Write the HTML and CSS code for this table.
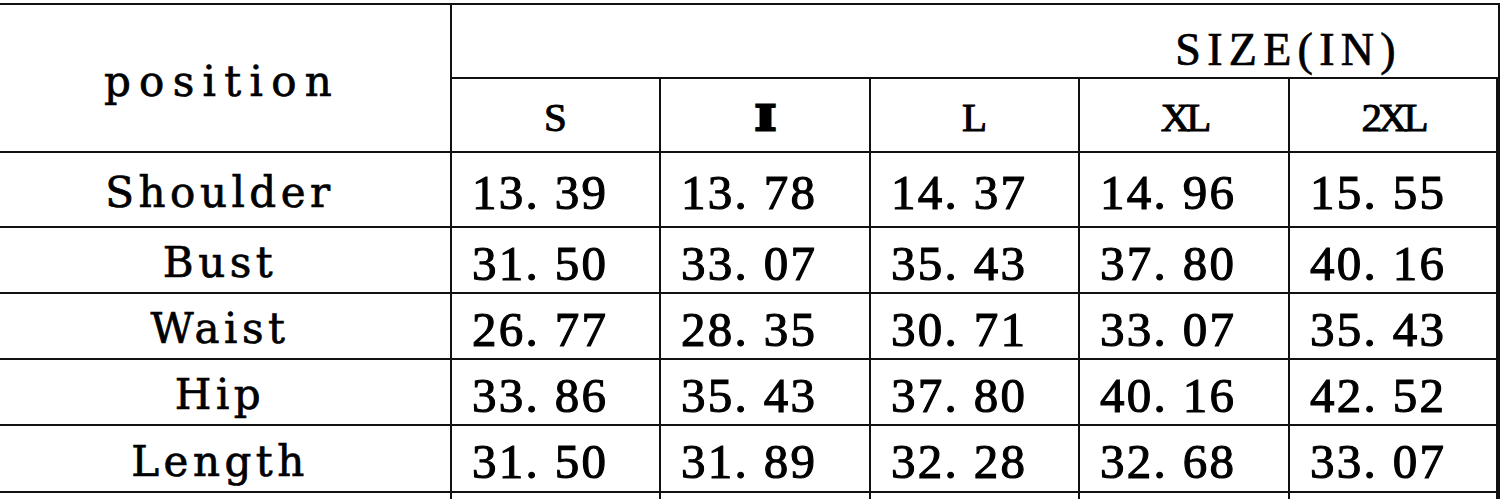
FILE: index.html
```html
<!DOCTYPE html>
<html lang="en">
<head>
<meta charset="utf-8">
<title>Size chart</title>
<link rel="stylesheet" href="styles.css">
</head>
<body>
<div class="chart">
  <div class="cell label pos">position</div>
  <div class="cell title">SIZE(IN)</div>
  <div class="cell size">S</div>
  <div class="cell size m"><span class="m-glyph">I</span></div>
  <div class="cell size">L</div>
  <div class="cell size tight">XL</div>
  <div class="cell size tight last">2XL</div>

  <div class="cell label">Shoulder</div>
  <div class="cell num">13. 39</div>
  <div class="cell num">13. 78</div>
  <div class="cell num">14. 37</div>
  <div class="cell num">14. 96</div>
  <div class="cell num last">15. 55</div>

  <div class="cell label">Bust</div>
  <div class="cell num">31. 50</div>
  <div class="cell num">33. 07</div>
  <div class="cell num">35. 43</div>
  <div class="cell num">37. 80</div>
  <div class="cell num last">40. 16</div>

  <div class="cell label">Waist</div>
  <div class="cell num">26. 77</div>
  <div class="cell num">28. 35</div>
  <div class="cell num">30. 71</div>
  <div class="cell num">33. 07</div>
  <div class="cell num last">35. 43</div>

  <div class="cell label">Hip</div>
  <div class="cell num">33. 86</div>
  <div class="cell num">35. 43</div>
  <div class="cell num">37. 80</div>
  <div class="cell num">40. 16</div>
  <div class="cell num last">42. 52</div>

  <div class="cell label">Length</div>
  <div class="cell num">31. 50</div>
  <div class="cell num">31. 89</div>
  <div class="cell num">32. 28</div>
  <div class="cell num">32. 68</div>
  <div class="cell num last">33. 07</div>

  <div class="cell label"></div>
  <div class="cell num"></div>
  <div class="cell num"></div>
  <div class="cell num"></div>
  <div class="cell num"></div>
  <div class="cell num last"></div>
</div>
</body>
</html>
```

FILE: styles.css
```css
html, body {
  margin: 0;
  padding: 0;
  background: #fff;
  overflow: hidden;
}

.chart {
  margin-top: 3px;
  padding-top: 2px;
  display: grid;
  grid-template-columns: 450px 207px 208px 207px 208px 208px;
  grid-template-rows: 72px 72px 73px 64px 64px 64px 65px 40px;
  gap: 2px;
  background: #111;
  width: 1500px;
  box-sizing: border-box;
}

.cell {
  background: #fff;
  color: #000;
  display: flex;
  align-items: center;
  box-sizing: border-box;
}

.last {
  border-right: 2px solid #111;
}

.label {
  font-family: "DejaVu Serif", "Liberation Serif", serif;
  font-size: 42px;
  letter-spacing: 4.5px;
  -webkit-text-stroke: 0.7px #000;
  justify-content: center;
  padding-right: 10px;
  padding-top: 5px;
}

.pos {
  grid-row: span 2;
  letter-spacing: 8.3px;
  padding-top: 6px;
  padding-right: 6px;
}

.title {
  grid-column: span 5;
  font-family: "Liberation Serif", "Times New Roman", serif;
  font-size: 46px;
  letter-spacing: 6.3px;
  -webkit-text-stroke: 0.7px #000;
  justify-content: flex-end;
  padding-right: 96px;
  padding-top: 17px;
}

.size {
  font-family: "Liberation Serif", "Times New Roman", serif;
  font-size: 41px;
  -webkit-text-stroke: 1px #000;
  justify-content: center;
  padding-top: 4px;
}

.tight {
  letter-spacing: -4px;
}

.m {
  font-weight: bold;
  -webkit-text-stroke: 3px #000;
  font-size: 38px;
}

.m-glyph {
  display: inline-block;
  transform: scaleX(1.35);
}

.num {
  font-family: "Liberation Serif", "Times New Roman", serif;
  font-size: 49px;
  letter-spacing: 2.3px;
  -webkit-text-stroke: 1.1px #000;
  padding-left: 20px;
  padding-top: 6px;
}
```
